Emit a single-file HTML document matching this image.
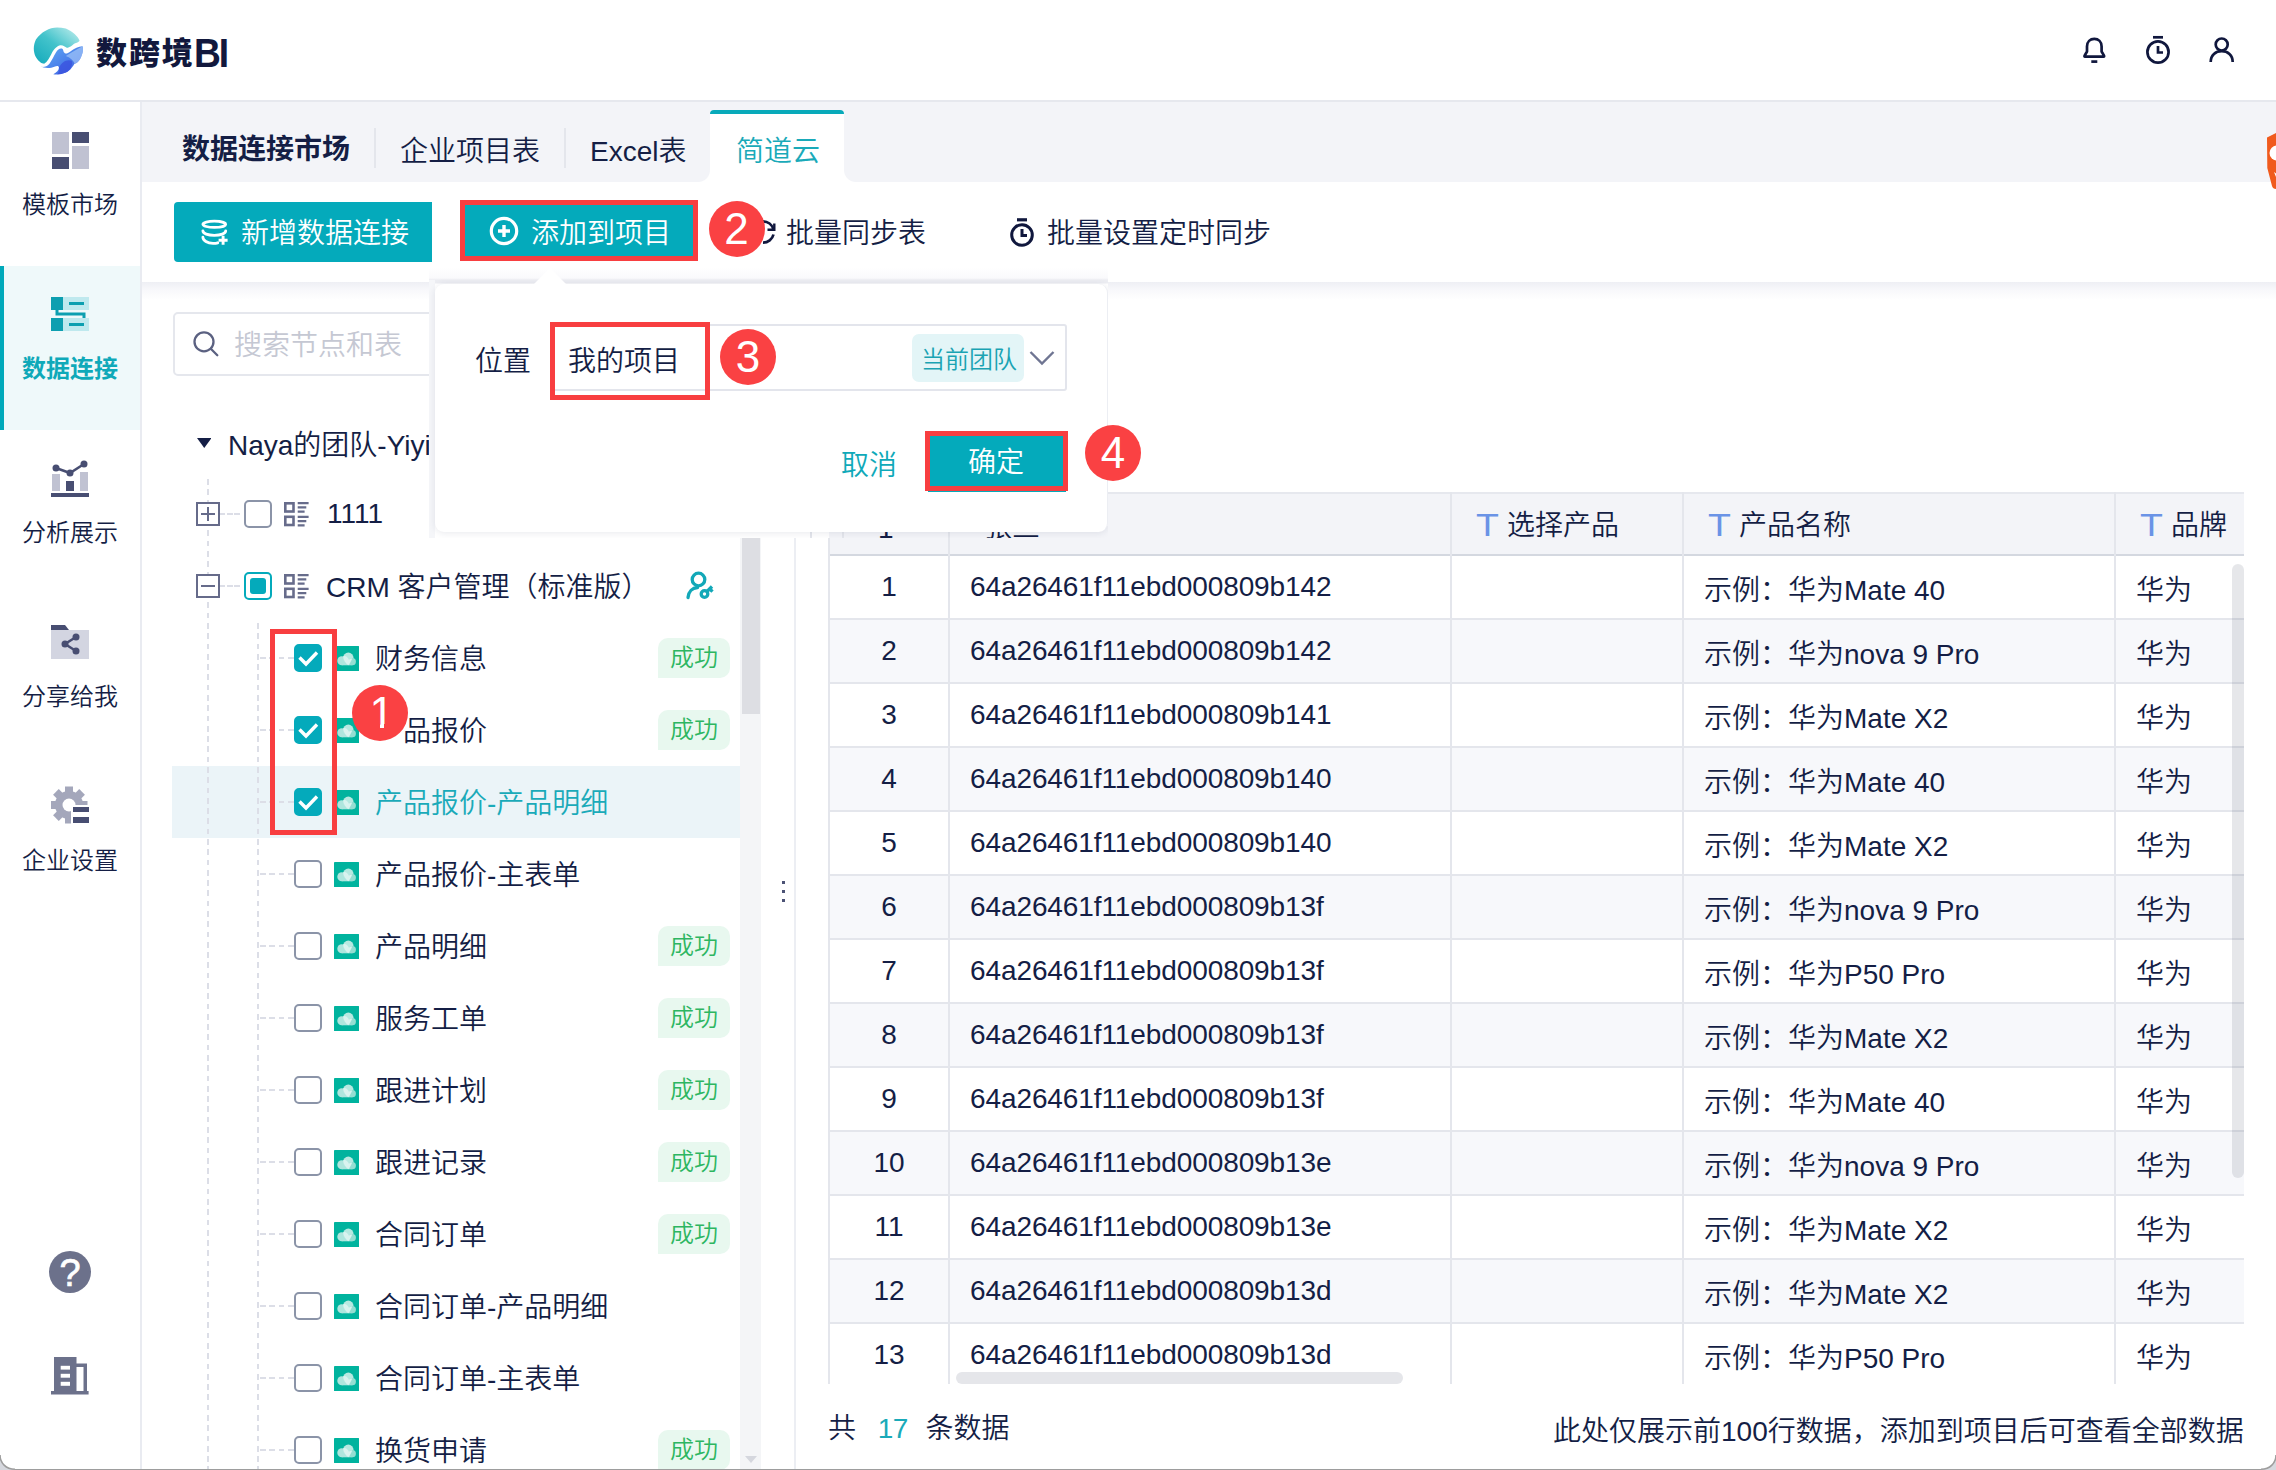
<!DOCTYPE html>
<html lang="zh-CN">
<head>
<meta charset="utf-8">
<title>数跨境BI</title>
<style>
*{box-sizing:border-box;margin:0;padding:0}
html,body{width:2276px;height:1470px;overflow:hidden;background:#fff}
body{font-family:"Liberation Sans","Noto Sans CJK SC",sans-serif;color:#141e45;font-size:28px;position:relative;font-weight:350}
.abs{position:absolute}
.t{position:absolute;white-space:nowrap;line-height:40px;height:40px;margin-top:2px}
/* header */
#header{position:absolute;left:0;top:0;width:2276px;height:102px;background:#fff;border-bottom:2px solid #e6e8ee}
#brand{position:absolute;left:0;top:0;color:#12183d}
#brand .bc{position:absolute;left:96px;top:32px;font-size:31px;line-height:44px;font-weight:900;letter-spacing:1.9px;white-space:nowrap}
#brand .bl{position:absolute;left:193.5px;top:28px;font-size:40px;line-height:50px;font-weight:bold;letter-spacing:-2.3px;transform-origin:0 50%;transform:scaleX(.93);white-space:nowrap}
/* sidebar */
#side{position:absolute;left:0;top:102px;width:142px;height:1368px;background:#fff;border-right:2px solid #e9ebf1}
.nav{position:absolute;left:0;width:140px;height:164px}
.nav .lb{position:absolute;left:0;width:140px;top:80px;text-align:center;font-size:24px;line-height:40px}
.nav.on{background:#eff9fa}
.nav.on:before{content:"";position:absolute;left:0;top:0;width:4px;height:164px;background:#00a9ba}
.nav.on .lb{color:#0fa9b9;font-weight:bold}
.nav svg{position:absolute}
/* tabbar */
#tabbar{position:absolute;left:142px;top:102px;width:2134px;height:80px;background:#f3f4f8}
#tab-on{position:absolute;left:710px;top:110px;width:134px;height:74px;background:#fff;border-top:4px solid #08aaba;border-radius:4px 4px 0 0}
.cc{position:absolute;top:170px;width:12px;height:12px}
.cc.l{left:698px;background:radial-gradient(circle at 0 0,#f3f4f8 11.5px,#fff 12.5px)}
.cc.r{left:844px;background:radial-gradient(circle at 100% 0,#f3f4f8 11.5px,#fff 12.5px)}
.sep{position:absolute;width:2px;height:40px;top:128px;background:#e4e6ec}
/* toolbar */
#toolbar{position:absolute;left:142px;top:182px;width:2134px;height:100px;background:#fff}
#tshadow{position:absolute;left:142px;top:282px;width:2134px;height:18px;background:linear-gradient(#eeeff4,#f8f8fb 45%,#fff)}
.btn{position:absolute;background:#04aabb;color:#fff;border-radius:3px}
.red{position:absolute;border:5px solid #f83e40}
.num{position:absolute;width:56px;height:56px;border-radius:50%;background:#fa4143;color:#fff;font-weight:400;font-size:44px;line-height:56px;text-align:center}
/* tree */
.row{position:absolute;left:172px;width:568px;height:72px}
.cb{position:absolute;width:28px;height:28px;border:2px solid #8b94a8;border-radius:5px;background:#fff}
.cb.on{background:#04aabb;border-color:#04aabb}
.ok{position:absolute;left:658px;width:72px;height:40px;border-radius:10px 10px 10px 0;background:#e8f8ef;color:#2db661;font-size:24px;line-height:40px;text-align:center}
.hl{position:absolute;height:2px;background:repeating-linear-gradient(to right,#dcdee7 0,#dcdee7 5.6px,transparent 5.6px,transparent 9.4px)}
.vl{position:absolute;width:2px;background:repeating-linear-gradient(to bottom,#dcdee7 0,#dcdee7 5.7px,transparent 5.7px,transparent 10.2857px)}
/* table */
#thead{position:absolute;left:829px;top:492px;width:1415px;height:64px;background:#f3f4f8;border-top:2px solid #e6e8ee;border-bottom:2px solid #d4d8e0}
.tr{position:absolute;left:829px;width:1415px;height:64px;border-bottom:2px solid #e4e6ec}
.tr.alt{background:#f7f8fb}
.vline{position:absolute;width:2px;background:#e4e6ec;top:492px;height:892px}
.T{color:#6a93e6;font-size:30px;transform-origin:0 50%;transform:scale(1.25,1.02)}
</style>
</head>
<body>
<div id="header">
<svg class="abs" style="left:32.5px;top:26.5px" width="50.3" height="48.3" viewBox="130 120 520 500">
<defs>
<linearGradient id="lg1" x1="0" y1="1" x2="1" y2="0"><stop offset="0" stop-color="#12a9bb"/><stop offset=".5" stop-color="#43c3cb"/><stop offset="1" stop-color="#c6f0ef"/></linearGradient>
<linearGradient id="lg2" x1="0" y1="0" x2="1" y2="1"><stop offset="0" stop-color="#63b0f4"/><stop offset=".6" stop-color="#4a7eea"/><stop offset="1" stop-color="#3b4fdc"/></linearGradient>
</defs>
<path d="M380 125 C300 125 215 170 160 250 C120 330 135 430 200 480 C215 495 232 500 245 500 C280 480 300 440 320 400 C340 360 370 320 410 310 C440 305 460 325 480 335 C510 335 540 305 560 290 C580 280 600 282 612 262 C595 215 540 165 470 135 C440 127 410 125 380 125 Z" fill="url(#lg1)"/>
<path d="M200 525 C225 540 270 535 300 500 C325 470 345 420 370 380 C385 355 400 345 420 342 C445 340 440 365 452 385 C465 405 490 390 520 370 C560 340 600 320 642 318 C655 345 645 400 620 445 C600 480 580 495 560 500 C545 520 520 570 470 592 C430 610 380 615 340 610 C375 590 400 565 398 540 C396 520 380 518 350 532 C310 550 245 550 200 525 Z" fill="url(#lg2)"/>
<path d="M470 420 C520 390 590 350 642 320 C655 345 645 400 620 445 C600 480 580 495 560 500 C550 470 520 440 470 420 Z" fill="#9cc2f7" opacity=".75"/>
<path d="M398 540 C430 480 480 450 530 470 C545 500 520 570 470 592 C440 606 410 610 380 612 C400 590 405 565 398 540 Z" fill="#3a52de" opacity=".8"/>
</svg>
<div id="brand"><span class="bc">数跨境</span><span class="bl">BI</span></div>
<svg class="abs" style="left:2078px;top:32px" width="34" height="36" viewBox="0 0 34 36" fill="none" stroke="#10173d" stroke-width="2.7">
<path d="M7 24.7 C6.5 24.7 6.3 24.2 6.6 23.7 L9 19.5 V14.5 C9 9.8 12.2 6.8 16.3 6.8 C20.4 6.8 23.6 9.8 23.6 14.5 V19.5 L26 23.7 C26.3 24.2 26.1 24.7 25.6 24.7 Z" stroke-linejoin="round"/>
<path d="M13.3 29.6 H19.3"/>
</svg>
<svg class="abs" style="left:2142px;top:32px" width="34" height="36" viewBox="0 0 34 36" fill="none" stroke="#10173d" stroke-width="2.7">
<circle cx="16" cy="20" r="10.6"/><path d="M11 5.3 H21"/><path d="M16 14 V20.5 H21"/>
</svg>
<svg class="abs" style="left:2205px;top:32px" width="34" height="36" viewBox="0 0 34 36" fill="none" stroke="#10173d" stroke-width="2.7">
<circle cx="16.7" cy="12.5" r="6"/><path d="M5.7 30 C5.7 23 10.7 19.2 16.7 19.2 C22.7 19.2 27.7 23 27.7 30"/>
</svg>
</div>
<div id="side">
<div class="nav" style="top:0px"><svg style="left:52px;top:30px" width="37" height="37" viewBox="0 0 37 37"><rect x="0" y="0" width="17" height="22" fill="#c0c2d2"/><rect x="20" y="0" width="17" height="11" fill="#484e72"/><rect x="20" y="14" width="17" height="23" fill="#c0c2d2"/><rect x="0" y="25" width="17" height="12" fill="#484e72"/></svg><div class="lb" style="top:83px">模板市场</div></div>
<div class="nav on" style="top:164px"><svg style="left:51px;top:31px" width="38" height="34" viewBox="0 0 38 34"><rect x="12" y="0" width="26" height="13" fill="#bfe9ee"/><rect x="12" y="21" width="26" height="13" fill="#bfe9ee"/><rect x="0" y="0" width="12" height="13" fill="#0d9fb0"/><rect x="0" y="21" width="12" height="13" fill="#0d9fb0"/><path d="M18 6.5 H33 M18 27.5 H33 M6 13 V17 H33 V21" fill="none" stroke="#0d9fb0" stroke-width="3"/></svg><div class="lb" style="top:83px">数据连接</div></div>
<div class="nav" style="top:328px"><svg style="left:51px;top:30px" width="38" height="38" viewBox="0 0 38 38"><rect x="1" y="14" width="8" height="17" fill="#c0c2d2"/><rect x="15" y="21" width="8" height="10" fill="#484e72"/><rect x="29" y="12" width="8" height="19" fill="#c0c2d2"/><rect x="0" y="33" width="38" height="4" fill="#484e72"/><path d="M5 8 L19 13 L33 4" stroke="#484e72" stroke-width="2.5" fill="none"/><circle cx="5" cy="8" r="3.5" fill="#484e72"/><circle cx="19" cy="13" r="3.5" fill="#484e72"/><circle cx="33" cy="4" r="3.5" fill="#484e72"/></svg><div class="lb" style="top:83px">分析展示</div></div>
<div class="nav" style="top:492px"><svg style="left:51px;top:31px" width="38" height="36" viewBox="0 0 38 36"><path d="M0 0 H14 L18 5 H0 Z" fill="#484e72"/><rect x="0" y="5" width="38" height="29" fill="#d3d5e1"/><path d="M25 12 L14 19 L25 26" stroke="#484e72" stroke-width="2.5" fill="none"/><circle cx="25" cy="12" r="3.5" fill="#484e72"/><circle cx="14" cy="19" r="3.5" fill="#484e72"/><circle cx="25" cy="26" r="3.5" fill="#484e72"/></svg><div class="lb" style="top:83px">分享给我</div></div>
<div class="nav" style="top:656px"><svg style="left:51px;top:28px" width="38" height="38" viewBox="0 0 38 38"><g transform="translate(18,19)"><g fill="#a4a7bb"><circle r="14"/><rect x="-4" y="-18.5" width="8" height="8" transform="rotate(0)"/><rect x="-4" y="-18.5" width="8" height="8" transform="rotate(45)"/><rect x="-4" y="-18.5" width="8" height="8" transform="rotate(90)"/><rect x="-4" y="-18.5" width="8" height="8" transform="rotate(135)"/><rect x="-4" y="-18.5" width="8" height="8" transform="rotate(180)"/><rect x="-4" y="-18.5" width="8" height="8" transform="rotate(225)"/><rect x="-4" y="-18.5" width="8" height="8" transform="rotate(270)"/><rect x="-4" y="-18.5" width="8" height="8" transform="rotate(315)"/></g><circle r="6.5" fill="#fff"/><rect x="2" y="0" width="20" height="20" fill="#fff"/></g><rect x="22" y="21" width="16" height="5" fill="#484e72"/><rect x="22" y="31" width="16" height="6" fill="#484e72"/></svg><div class="lb" style="top:83px">企业设置</div></div>
<svg class="abs" style="left:49px;top:1149px" width="42" height="42" viewBox="0 0 42 42"><circle cx="21" cy="21" r="21" fill="#6c718b"/><text x="21" y="34.5" font-size="38" fill="#fff" stroke="#fff" stroke-width=".700" text-anchor="middle" font-family="Liberation Sans,sans-serif">?</text></svg>
<svg class="abs" style="left:51px;top:1255px" width="38" height="38" viewBox="0 0 38 38"><path d="M3 0 H25.5 V6.4 H36 V34 H37.6 V37.6 H0 V34 H3 Z" fill="#6c718b"/><rect x="25.5" y="10" width="7" height="24" fill="#fff"/><rect x="9.7" y="8.8" width="9.3" height="3.8" fill="#fff"/><rect x="9.7" y="16.8" width="9.3" height="3.9" fill="#fff"/><rect x="9.7" y="24.8" width="9.3" height="4" fill="#fff"/></svg>
</div>
<div id="tabbar"></div>
<div class="t" style="left:182px;top:128px;font-weight:bold">数据连接市场</div>
<div class="sep" style="left:374px"></div>
<div class="t" style="left:400px;top:130px">企业项目表</div>
<div class="sep" style="left:564px"></div>
<div class="t" style="left:590px;top:130px">Excel表</div>
<div id="tab-on"></div><div class="cc l"></div><div class="cc r"></div>
<div class="t" style="left:736px;top:130px;color:#1aaab9">简道云</div>


<div id="toolbar"></div><div id="tshadow"></div>
<div class="btn" style="left:174px;top:202px;width:258px;height:60px;border-radius:4px 0 0 4px"></div>
<svg class="abs" style="left:200px;top:219px" width="30" height="28" viewBox="0 0 30 28" fill="none" stroke="#fff" stroke-width="2.8" stroke-linecap="round"><ellipse cx="14.3" cy="5.3" rx="11.4" ry="3.1"/><path d="M2.9 11.8 C2.9 14.6 8 16.4 14.3 16.4 C20.6 16.4 25.7 14.6 25.7 11.8"/><path d="M2.9 18.2 C2.9 21.5 7.5 24.3 13 24.4 C14.8 24.4 16.5 24.2 17.8 23.8"/><path d="M23.1 16.8 V25.8 M18.6 21.3 H27.6" stroke-linecap="butt" stroke-width="2.9"/></svg>
<div class="t" style="left:241px;top:212px;color:#fff">新增数据连接</div>
<div class="btn" style="left:462px;top:202px;width:234px;height:58px;border-radius:0"></div>
<div class="red" style="left:460px;top:200px;width:238px;height:61px"></div>
<svg class="abs" style="left:489px;top:215.7px" width="30" height="30" viewBox="0 0 30 30" fill="none" stroke="#fff" stroke-width="3.2"><circle cx="15" cy="15" r="12.7"/><path d="M15 9 V21 M9 15 H21" stroke-width="3.4"/></svg>
<div class="t" style="left:531px;top:212px;color:#fff">添加到项目</div>
<svg class="abs" style="left:748px;top:216px" width="30" height="32" viewBox="0 0 30 32" fill="none" stroke="#10173d" stroke-width="2.7"><path d="M15 5.3 A10.7 10.7 0 0 1 25.3 13.2"/><path d="M25.5 18.5 A10.7 10.7 0 0 1 15 26.7"/><path d="M19.5 13.8 H26.3 V7.5" stroke-width="2.4"/></svg>
<div class="num" style="left:708.5px;top:200.7px">2</div>
<div class="t" style="left:786px;top:212px">批量同步表</div>
<svg class="abs" style="left:1007px;top:216px" width="30" height="34" viewBox="0 0 30 34" fill="none" stroke="#10173d" stroke-width="3"><circle cx="15" cy="19" r="10.3"/><path d="M10 3.8 H20" stroke-width="3.2"/><path d="M15 13 V19.5 H20"/></svg>
<div class="t" style="left:1047px;top:212px">批量设置定时同步</div>
<svg class="abs" style="left:2266px;top:132px" width="10" height="57" viewBox="0 0 10 57"><path d="M1 5.5 L10 1 V57 C8 57 6.5 56 6 54 L1.3 36 Z" fill="#f05a1d"/><circle cx="11" cy="21" r="7.5" fill="#fff"/><path d="M8 40 L10 41.5 V45 Z" fill="#fff"/></svg>

<div class="abs" style="left:172.5px;top:312px;width:300px;height:64px;border:2px solid #e5e7ed;border-radius:5px"></div>
<svg class="abs" style="left:191px;top:329px" width="32" height="32" viewBox="0 0 32 32" fill="none" stroke="#5b6181" stroke-width="2.3"><circle cx="13" cy="12.8" r="9.5"/><path d="M19.8 19.8 L26.3 26.3" stroke-linecap="round"/></svg>
<div class="t" style="left:234px;top:324px;color:#c5c8d3">搜索节点和表</div>
<svg class="abs" style="left:196.8px;top:438px" width="14.5" height="10" viewBox="0 0 14.5 10"><path d="M0 0 H14.5 L7.25 10 Z" fill="#141e45"/></svg>
<div class="t" style="left:228px;top:424px">Naya的团队-Yiyi</div>
<div class="vl" style="left:207px;top:479.2px;height:991px"></div>
<div class="vl" style="left:257px;top:623.2px;height:847px"></div>

<div class="hl" style="left:220px;top:513px;width:20px;background:repeating-linear-gradient(to right,#dcdee7 0,#dcdee7 5.3px,transparent 5.3px,transparent 7.2px)"></div>
<svg class="abs" style="left:196px;top:502px" width="24" height="24" viewBox="0 0 24 24" fill="#fff" stroke="#666b8a" stroke-width="2"><rect x="1" y="1" width="22" height="22"/><path d="M5 12 H19 M12 5 V19"/></svg>
<div class="cb" style="left:244px;top:500px"></div>
<svg class="abs" style="left:283.7px;top:501.8px" width="25" height="25" viewBox="0 0 25 25" fill="none" stroke="#676c8b"><rect x="1.3" y="1.3" width="8.2" height="8.2" stroke-width="2.6"/><rect x="1.3" y="14.8" width="8.2" height="8.2" stroke-width="2.6"/><path d="M13.7 1.2 H24.6 M13.7 5.4 H22.3 M13.7 9.7 H20.6 M13.7 14.9 H24.6 M13.7 19.1 H22.3 M13.7 23.4 H20.6" stroke-width="2.3"/></svg>
<div class="t" style="left:327px;top:492px">1111</div>
<div class="hl" style="left:220px;top:585px;width:20px;background:repeating-linear-gradient(to right,#dcdee7 0,#dcdee7 5.3px,transparent 5.3px,transparent 7.2px)"></div>
<svg class="abs" style="left:196px;top:574px" width="24" height="24" viewBox="0 0 24 24" fill="#fff" stroke="#666b8a" stroke-width="2"><rect x="1" y="1" width="22" height="22"/><path d="M5 12 H19"/></svg>
<div class="cb" style="left:244px;top:572px;border-color:#04aabb"></div><div class="abs" style="left:250px;top:578px;width:16px;height:16px;border-radius:3px;background:#04aabb"></div>
<svg class="abs" style="left:283.7px;top:573.8px" width="25" height="25" viewBox="0 0 25 25" fill="none" stroke="#676c8b"><rect x="1.3" y="1.3" width="8.2" height="8.2" stroke-width="2.6"/><rect x="1.3" y="14.8" width="8.2" height="8.2" stroke-width="2.6"/><path d="M13.7 1.2 H24.6 M13.7 5.4 H22.3 M13.7 9.7 H20.6 M13.7 14.9 H24.6 M13.7 19.1 H22.3 M13.7 23.4 H20.6" stroke-width="2.3"/></svg>
<div class="t" style="left:326px;top:566px">CRM 客户管理（标准版）</div>
<svg class="abs" style="left:685px;top:571px" width="32" height="30" viewBox="0 0 32 30" fill="none" stroke="#12a8b8" stroke-width="3.3" stroke-linecap="round"><circle cx="13.5" cy="8.5" r="6.3"/><path d="M3 26.5 C3.5 20.5 7.5 16.8 12.5 16.5"/><circle cx="19.5" cy="23" r="3.3"/><path d="M22 20.5 L27 15.5 M24.8 18 L27.5 20.7" stroke-linecap="butt"/></svg>
<div class="hl" style="left:260.2px;top:657px;width:34px"></div>
<div class="cb on" style="left:294px;top:644px"></div><svg class="abs" style="left:294px;top:644px" width="28" height="28" viewBox="0 0 28 28" fill="none" stroke="#fff" stroke-width="3.4"><path d="M5.5 13.5 L12 20 L23 8.5"/></svg>
<svg class="abs" style="left:333.8px;top:645.9px" width="25.2" height="25.2" viewBox="0 0 25.2 25.2"><rect width="25.2" height="25.2" rx=".800" fill="#00b39e"/><circle cx="7.8" cy="14.8" r="4.5" fill="#aee6de"/><rect x="7.8" y="14" width="10.6" height="5.3" fill="#aee6de"/><circle cx="14.3" cy="11.9" r="5.3" fill="#b7e9e1"/><circle cx="18.3" cy="15.7" r="3.6" fill="#95ded2"/><path d="M9.2 10.4 C11 9.2 13.6 10.5 14.9 13.8 C15.8 12.6 17 12.3 18.1 12.7 C17.3 15 15.8 17.5 14.3 19.3 C11.5 17.3 9.3 13.5 9.2 10.4 Z" fill="#d9f3ef"/></svg>
<div class="t" style="left:375px;top:638px">财务信息</div>
<div class="ok" style="top:638px">成功</div>
<div class="hl" style="left:260.2px;top:729px;width:34px"></div>
<div class="cb on" style="left:294px;top:716px"></div><svg class="abs" style="left:294px;top:716px" width="28" height="28" viewBox="0 0 28 28" fill="none" stroke="#fff" stroke-width="3.4"><path d="M5.5 13.5 L12 20 L23 8.5"/></svg>
<svg class="abs" style="left:333.8px;top:717.9px" width="25.2" height="25.2" viewBox="0 0 25.2 25.2"><rect width="25.2" height="25.2" rx=".800" fill="#00b39e"/><circle cx="7.8" cy="14.8" r="4.5" fill="#aee6de"/><rect x="7.8" y="14" width="10.6" height="5.3" fill="#aee6de"/><circle cx="14.3" cy="11.9" r="5.3" fill="#b7e9e1"/><circle cx="18.3" cy="15.7" r="3.6" fill="#95ded2"/><path d="M9.2 10.4 C11 9.2 13.6 10.5 14.9 13.8 C15.8 12.6 17 12.3 18.1 12.7 C17.3 15 15.8 17.5 14.3 19.3 C11.5 17.3 9.3 13.5 9.2 10.4 Z" fill="#d9f3ef"/></svg>
<div class="t" style="left:375px;top:710px">产品报价</div>
<div class="ok" style="top:710px">成功</div>
<div class="abs" style="left:172px;top:766px;width:568px;height:72px;background:#ebf4f8"></div><div class="vl" style="left:207px;top:767.2px;height:70.8px"></div><div class="vl" style="left:257px;top:767.2px;height:70.8px"></div>
<div class="hl" style="left:260.2px;top:801px;width:34px"></div>
<div class="cb on" style="left:294px;top:788px"></div><svg class="abs" style="left:294px;top:788px" width="28" height="28" viewBox="0 0 28 28" fill="none" stroke="#fff" stroke-width="3.4"><path d="M5.5 13.5 L12 20 L23 8.5"/></svg>
<svg class="abs" style="left:333.8px;top:789.9px" width="25.2" height="25.2" viewBox="0 0 25.2 25.2"><rect width="25.2" height="25.2" rx=".800" fill="#00b39e"/><circle cx="7.8" cy="14.8" r="4.5" fill="#aee6de"/><rect x="7.8" y="14" width="10.6" height="5.3" fill="#aee6de"/><circle cx="14.3" cy="11.9" r="5.3" fill="#b7e9e1"/><circle cx="18.3" cy="15.7" r="3.6" fill="#95ded2"/><path d="M9.2 10.4 C11 9.2 13.6 10.5 14.9 13.8 C15.8 12.6 17 12.3 18.1 12.7 C17.3 15 15.8 17.5 14.3 19.3 C11.5 17.3 9.3 13.5 9.2 10.4 Z" fill="#d9f3ef"/></svg>
<div class="t" style="left:375px;top:782px;color:#1aaab9">产品报价-产品明细</div>
<div class="hl" style="left:260.2px;top:873px;width:34px"></div>
<div class="cb" style="left:294px;top:860px"></div>
<svg class="abs" style="left:333.8px;top:861.9px" width="25.2" height="25.2" viewBox="0 0 25.2 25.2"><rect width="25.2" height="25.2" rx=".800" fill="#00b39e"/><circle cx="7.8" cy="14.8" r="4.5" fill="#aee6de"/><rect x="7.8" y="14" width="10.6" height="5.3" fill="#aee6de"/><circle cx="14.3" cy="11.9" r="5.3" fill="#b7e9e1"/><circle cx="18.3" cy="15.7" r="3.6" fill="#95ded2"/><path d="M9.2 10.4 C11 9.2 13.6 10.5 14.9 13.8 C15.8 12.6 17 12.3 18.1 12.7 C17.3 15 15.8 17.5 14.3 19.3 C11.5 17.3 9.3 13.5 9.2 10.4 Z" fill="#d9f3ef"/></svg>
<div class="t" style="left:375px;top:854px">产品报价-主表单</div>
<div class="hl" style="left:260.2px;top:945px;width:34px"></div>
<div class="cb" style="left:294px;top:932px"></div>
<svg class="abs" style="left:333.8px;top:933.9px" width="25.2" height="25.2" viewBox="0 0 25.2 25.2"><rect width="25.2" height="25.2" rx=".800" fill="#00b39e"/><circle cx="7.8" cy="14.8" r="4.5" fill="#aee6de"/><rect x="7.8" y="14" width="10.6" height="5.3" fill="#aee6de"/><circle cx="14.3" cy="11.9" r="5.3" fill="#b7e9e1"/><circle cx="18.3" cy="15.7" r="3.6" fill="#95ded2"/><path d="M9.2 10.4 C11 9.2 13.6 10.5 14.9 13.8 C15.8 12.6 17 12.3 18.1 12.7 C17.3 15 15.8 17.5 14.3 19.3 C11.5 17.3 9.3 13.5 9.2 10.4 Z" fill="#d9f3ef"/></svg>
<div class="t" style="left:375px;top:926px">产品明细</div>
<div class="ok" style="top:926px">成功</div>
<div class="hl" style="left:260.2px;top:1017px;width:34px"></div>
<div class="cb" style="left:294px;top:1004px"></div>
<svg class="abs" style="left:333.8px;top:1005.9px" width="25.2" height="25.2" viewBox="0 0 25.2 25.2"><rect width="25.2" height="25.2" rx=".800" fill="#00b39e"/><circle cx="7.8" cy="14.8" r="4.5" fill="#aee6de"/><rect x="7.8" y="14" width="10.6" height="5.3" fill="#aee6de"/><circle cx="14.3" cy="11.9" r="5.3" fill="#b7e9e1"/><circle cx="18.3" cy="15.7" r="3.6" fill="#95ded2"/><path d="M9.2 10.4 C11 9.2 13.6 10.5 14.9 13.8 C15.8 12.6 17 12.3 18.1 12.7 C17.3 15 15.8 17.5 14.3 19.3 C11.5 17.3 9.3 13.5 9.2 10.4 Z" fill="#d9f3ef"/></svg>
<div class="t" style="left:375px;top:998px">服务工单</div>
<div class="ok" style="top:998px">成功</div>
<div class="hl" style="left:260.2px;top:1089px;width:34px"></div>
<div class="cb" style="left:294px;top:1076px"></div>
<svg class="abs" style="left:333.8px;top:1077.9px" width="25.2" height="25.2" viewBox="0 0 25.2 25.2"><rect width="25.2" height="25.2" rx=".800" fill="#00b39e"/><circle cx="7.8" cy="14.8" r="4.5" fill="#aee6de"/><rect x="7.8" y="14" width="10.6" height="5.3" fill="#aee6de"/><circle cx="14.3" cy="11.9" r="5.3" fill="#b7e9e1"/><circle cx="18.3" cy="15.7" r="3.6" fill="#95ded2"/><path d="M9.2 10.4 C11 9.2 13.6 10.5 14.9 13.8 C15.8 12.6 17 12.3 18.1 12.7 C17.3 15 15.8 17.5 14.3 19.3 C11.5 17.3 9.3 13.5 9.2 10.4 Z" fill="#d9f3ef"/></svg>
<div class="t" style="left:375px;top:1070px">跟进计划</div>
<div class="ok" style="top:1070px">成功</div>
<div class="hl" style="left:260.2px;top:1161px;width:34px"></div>
<div class="cb" style="left:294px;top:1148px"></div>
<svg class="abs" style="left:333.8px;top:1149.9px" width="25.2" height="25.2" viewBox="0 0 25.2 25.2"><rect width="25.2" height="25.2" rx=".800" fill="#00b39e"/><circle cx="7.8" cy="14.8" r="4.5" fill="#aee6de"/><rect x="7.8" y="14" width="10.6" height="5.3" fill="#aee6de"/><circle cx="14.3" cy="11.9" r="5.3" fill="#b7e9e1"/><circle cx="18.3" cy="15.7" r="3.6" fill="#95ded2"/><path d="M9.2 10.4 C11 9.2 13.6 10.5 14.9 13.8 C15.8 12.6 17 12.3 18.1 12.7 C17.3 15 15.8 17.5 14.3 19.3 C11.5 17.3 9.3 13.5 9.2 10.4 Z" fill="#d9f3ef"/></svg>
<div class="t" style="left:375px;top:1142px">跟进记录</div>
<div class="ok" style="top:1142px">成功</div>
<div class="hl" style="left:260.2px;top:1233px;width:34px"></div>
<div class="cb" style="left:294px;top:1220px"></div>
<svg class="abs" style="left:333.8px;top:1221.9px" width="25.2" height="25.2" viewBox="0 0 25.2 25.2"><rect width="25.2" height="25.2" rx=".800" fill="#00b39e"/><circle cx="7.8" cy="14.8" r="4.5" fill="#aee6de"/><rect x="7.8" y="14" width="10.6" height="5.3" fill="#aee6de"/><circle cx="14.3" cy="11.9" r="5.3" fill="#b7e9e1"/><circle cx="18.3" cy="15.7" r="3.6" fill="#95ded2"/><path d="M9.2 10.4 C11 9.2 13.6 10.5 14.9 13.8 C15.8 12.6 17 12.3 18.1 12.7 C17.3 15 15.8 17.5 14.3 19.3 C11.5 17.3 9.3 13.5 9.2 10.4 Z" fill="#d9f3ef"/></svg>
<div class="t" style="left:375px;top:1214px">合同订单</div>
<div class="ok" style="top:1214px">成功</div>
<div class="hl" style="left:260.2px;top:1305px;width:34px"></div>
<div class="cb" style="left:294px;top:1292px"></div>
<svg class="abs" style="left:333.8px;top:1293.9px" width="25.2" height="25.2" viewBox="0 0 25.2 25.2"><rect width="25.2" height="25.2" rx=".800" fill="#00b39e"/><circle cx="7.8" cy="14.8" r="4.5" fill="#aee6de"/><rect x="7.8" y="14" width="10.6" height="5.3" fill="#aee6de"/><circle cx="14.3" cy="11.9" r="5.3" fill="#b7e9e1"/><circle cx="18.3" cy="15.7" r="3.6" fill="#95ded2"/><path d="M9.2 10.4 C11 9.2 13.6 10.5 14.9 13.8 C15.8 12.6 17 12.3 18.1 12.7 C17.3 15 15.8 17.5 14.3 19.3 C11.5 17.3 9.3 13.5 9.2 10.4 Z" fill="#d9f3ef"/></svg>
<div class="t" style="left:375px;top:1286px">合同订单-产品明细</div>
<div class="hl" style="left:260.2px;top:1377px;width:34px"></div>
<div class="cb" style="left:294px;top:1364px"></div>
<svg class="abs" style="left:333.8px;top:1365.9px" width="25.2" height="25.2" viewBox="0 0 25.2 25.2"><rect width="25.2" height="25.2" rx=".800" fill="#00b39e"/><circle cx="7.8" cy="14.8" r="4.5" fill="#aee6de"/><rect x="7.8" y="14" width="10.6" height="5.3" fill="#aee6de"/><circle cx="14.3" cy="11.9" r="5.3" fill="#b7e9e1"/><circle cx="18.3" cy="15.7" r="3.6" fill="#95ded2"/><path d="M9.2 10.4 C11 9.2 13.6 10.5 14.9 13.8 C15.8 12.6 17 12.3 18.1 12.7 C17.3 15 15.8 17.5 14.3 19.3 C11.5 17.3 9.3 13.5 9.2 10.4 Z" fill="#d9f3ef"/></svg>
<div class="t" style="left:375px;top:1358px">合同订单-主表单</div>
<div class="hl" style="left:260.2px;top:1449px;width:34px"></div>
<div class="cb" style="left:294px;top:1436px"></div>
<svg class="abs" style="left:333.8px;top:1437.9px" width="25.2" height="25.2" viewBox="0 0 25.2 25.2"><rect width="25.2" height="25.2" rx=".800" fill="#00b39e"/><circle cx="7.8" cy="14.8" r="4.5" fill="#aee6de"/><rect x="7.8" y="14" width="10.6" height="5.3" fill="#aee6de"/><circle cx="14.3" cy="11.9" r="5.3" fill="#b7e9e1"/><circle cx="18.3" cy="15.7" r="3.6" fill="#95ded2"/><path d="M9.2 10.4 C11 9.2 13.6 10.5 14.9 13.8 C15.8 12.6 17 12.3 18.1 12.7 C17.3 15 15.8 17.5 14.3 19.3 C11.5 17.3 9.3 13.5 9.2 10.4 Z" fill="#d9f3ef"/></svg>
<div class="t" style="left:375px;top:1430px">换货申请</div>
<div class="ok" style="top:1430px">成功</div>
<div class="red" style="left:270px;top:629px;width:67px;height:206px;border-width:5px"></div>
<div class="abs" style="left:371px;top:735px;width:16px;height:11px;background:#fff"></div><div class="num" style="left:352.3px;top:685.2px;padding-left:3px">1<i style="position:absolute;left:18.5px;top:39px;width:9.7px;height:4.5px;background:#fa4143"></i><i style="position:absolute;left:31.8px;top:39px;width:9.5px;height:4.5px;background:#fa4143"></i></div>
<div class="abs" style="left:740px;top:283px;width:21px;height:1187px;background:#f4f5f7"></div>
<div class="abs" style="left:742px;top:538px;width:18px;height:176px;background:#dddee3"></div>
<svg class="abs" style="left:745px;top:1456px" width="12" height="7" viewBox="0 0 12 7"><path d="M0 0 H12 L6 7 Z" fill="#d5d7de"/></svg>
<div class="abs" style="left:794px;top:283px;width:2px;height:1187px;background:#eceef3"></div>
<div class="abs" style="left:782px;top:881px;width:3px;height:3px;background:#4b5275"></div>
<div class="abs" style="left:782px;top:890px;width:3px;height:3px;background:#4b5275"></div>
<div class="abs" style="left:782px;top:899px;width:3px;height:3px;background:#4b5275"></div>

<div id="thead"></div>
<div class="tr" style="top:556px;height:64px"></div>
<div class="t" style="left:829px;width:120px;text-align:center;top:565px">1</div>
<div class="t" style="left:970px;top:565px;letter-spacing:-.1px">64a26461f11ebd000809b142</div>
<div class="t" style="left:1704px;top:569px">示例：华为Mate 40</div>
<div class="t" style="left:2136px;top:569px">华为</div>
<div class="tr alt" style="top:620px;height:64px"></div>
<div class="t" style="left:829px;width:120px;text-align:center;top:629px">2</div>
<div class="t" style="left:970px;top:629px;letter-spacing:-.1px">64a26461f11ebd000809b142</div>
<div class="t" style="left:1704px;top:633px">示例：华为nova 9 Pro</div>
<div class="t" style="left:2136px;top:633px">华为</div>
<div class="tr" style="top:684px;height:64px"></div>
<div class="t" style="left:829px;width:120px;text-align:center;top:693px">3</div>
<div class="t" style="left:970px;top:693px;letter-spacing:-.1px">64a26461f11ebd000809b141</div>
<div class="t" style="left:1704px;top:697px">示例：华为Mate X2</div>
<div class="t" style="left:2136px;top:697px">华为</div>
<div class="tr alt" style="top:748px;height:64px"></div>
<div class="t" style="left:829px;width:120px;text-align:center;top:757px">4</div>
<div class="t" style="left:970px;top:757px;letter-spacing:-.1px">64a26461f11ebd000809b140</div>
<div class="t" style="left:1704px;top:761px">示例：华为Mate 40</div>
<div class="t" style="left:2136px;top:761px">华为</div>
<div class="tr" style="top:812px;height:64px"></div>
<div class="t" style="left:829px;width:120px;text-align:center;top:821px">5</div>
<div class="t" style="left:970px;top:821px;letter-spacing:-.1px">64a26461f11ebd000809b140</div>
<div class="t" style="left:1704px;top:825px">示例：华为Mate X2</div>
<div class="t" style="left:2136px;top:825px">华为</div>
<div class="tr alt" style="top:876px;height:64px"></div>
<div class="t" style="left:829px;width:120px;text-align:center;top:885px">6</div>
<div class="t" style="left:970px;top:885px;letter-spacing:-.1px">64a26461f11ebd000809b13f</div>
<div class="t" style="left:1704px;top:889px">示例：华为nova 9 Pro</div>
<div class="t" style="left:2136px;top:889px">华为</div>
<div class="tr" style="top:940px;height:64px"></div>
<div class="t" style="left:829px;width:120px;text-align:center;top:949px">7</div>
<div class="t" style="left:970px;top:949px;letter-spacing:-.1px">64a26461f11ebd000809b13f</div>
<div class="t" style="left:1704px;top:953px">示例：华为P50 Pro</div>
<div class="t" style="left:2136px;top:953px">华为</div>
<div class="tr alt" style="top:1004px;height:64px"></div>
<div class="t" style="left:829px;width:120px;text-align:center;top:1013px">8</div>
<div class="t" style="left:970px;top:1013px;letter-spacing:-.1px">64a26461f11ebd000809b13f</div>
<div class="t" style="left:1704px;top:1017px">示例：华为Mate X2</div>
<div class="t" style="left:2136px;top:1017px">华为</div>
<div class="tr" style="top:1068px;height:64px"></div>
<div class="t" style="left:829px;width:120px;text-align:center;top:1077px">9</div>
<div class="t" style="left:970px;top:1077px;letter-spacing:-.1px">64a26461f11ebd000809b13f</div>
<div class="t" style="left:1704px;top:1081px">示例：华为Mate 40</div>
<div class="t" style="left:2136px;top:1081px">华为</div>
<div class="tr alt" style="top:1132px;height:64px"></div>
<div class="t" style="left:829px;width:120px;text-align:center;top:1141px">10</div>
<div class="t" style="left:970px;top:1141px;letter-spacing:-.1px">64a26461f11ebd000809b13e</div>
<div class="t" style="left:1704px;top:1145px">示例：华为nova 9 Pro</div>
<div class="t" style="left:2136px;top:1145px">华为</div>
<div class="tr" style="top:1196px;height:64px"></div>
<div class="t" style="left:829px;width:120px;text-align:center;top:1205px">11</div>
<div class="t" style="left:970px;top:1205px;letter-spacing:-.1px">64a26461f11ebd000809b13e</div>
<div class="t" style="left:1704px;top:1209px">示例：华为Mate X2</div>
<div class="t" style="left:2136px;top:1209px">华为</div>
<div class="tr alt" style="top:1260px;height:64px"></div>
<div class="t" style="left:829px;width:120px;text-align:center;top:1269px">12</div>
<div class="t" style="left:970px;top:1269px;letter-spacing:-.1px">64a26461f11ebd000809b13d</div>
<div class="t" style="left:1704px;top:1273px">示例：华为Mate X2</div>
<div class="t" style="left:2136px;top:1273px">华为</div>
<div class="tr" style="top:1324px;height:60px;border-bottom:none"></div>
<div class="t" style="left:829px;width:120px;text-align:center;top:1333px">13</div>
<div class="t" style="left:970px;top:1333px;letter-spacing:-.1px">64a26461f11ebd000809b13d</div>
<div class="t" style="left:1704px;top:1337px">示例：华为P50 Pro</div>
<div class="t" style="left:2136px;top:1337px">华为</div>
<div class="vline" style="left:828px"></div>
<div class="vline" style="left:948px"></div>
<div class="vline" style="left:1450px"></div>
<div class="vline" style="left:1682px"></div>
<div class="vline" style="left:2114px"></div>
<div class="t T" style="left:1476px;top:504px">T</div><div class="t" style="left:1507px;top:504px">选择产品</div>
<div class="t T" style="left:1708px;top:504px">T</div><div class="t" style="left:1739px;top:504px">产品名称</div>
<div class="t T" style="left:2140px;top:504px">T</div><div class="t" style="left:2171px;top:504px">品牌</div>
<div class="abs" style="left:2232.3px;top:564px;width:11.7px;height:614px;border-radius:6px;background:rgba(60,66,90,.13)"></div>
<div class="abs" style="left:956px;top:1372px;width:447px;height:12px;border-radius:6px;background:#e5e6ea"></div>
<div class="t" style="left:828px;top:1407px">共 <span style="color:#1aaab9;margin:0 10px 0 14px;letter-spacing:-.6px">17</span> 条数据</div>
<div class="t" style="left:1553px;top:1410px">此处仅展示前100行数据，添加到项目后可查看全部数据</div>

<div class="abs" style="left:429px;top:268px;width:678.5px;height:270px;overflow:hidden;background:#fff">
<div class="abs" style="left:0;top:0;width:680px;height:16px;background:linear-gradient(#fff,#fafafc 10px,#ecedf2 12px,#ecedf2 15px,#fff 16px)"></div>
<div class="abs" style="left:0;top:12px;width:6px;height:258px;background:#f5f6f9"></div>
<div class="abs" style="left:400px;top:258px;width:280px;height:12px;background:#f3f4f8"></div>
<div class="abs" style="left:381px;top:258px;width:2px;height:12px;background:#e4e6ec"></div>
<div class="abs" style="left:413px;top:258px;width:2px;height:12px;background:#e4e6ec"></div>
<div class="abs" style="left:519px;top:258px;width:2px;height:12px;background:#e4e6ec"></div>
<div class="t" style="left:449px;top:239px">1</div><div class="t" style="left:555px;top:238px">张三 一</div>
<div class="abs" style="left:6px;top:15.5px;width:672.5px;height:248.5px;background:#fff;border-radius:9px;border-right:1.5px solid #eceef3;box-shadow:0 1px 7px rgba(30,40,80,.10)"></div>
</div>
<svg class="abs" style="left:534px;top:268px" width="32" height="16" viewBox="0 0 32 16"><path d="M0 16 L16 0 L32 16 Z" fill="#fff"/></svg>
<div class="t" style="left:475px;top:340px">位置</div>
<div class="abs" style="left:552px;top:324px;width:515px;height:67px;border:2px solid #e3e5ec;border-radius:3px"></div>
<div class="t" style="left:568px;top:340px">我的项目</div>
<div class="red" style="left:549.5px;top:321.5px;width:160px;height:78px"></div>
<div class="num" style="left:720.1px;top:329.3px">3</div>
<div class="abs" style="left:912px;top:334px;width:112px;height:48px;border-radius:7px;background:#e3f5f7"></div>
<div class="t" style="left:921px;top:338px;font-size:24px;color:#1aa3b3">当前团队</div>
<svg class="abs" style="left:1029px;top:350px" width="26" height="16" viewBox="0 0 26 16" fill="none" stroke="#6f7592" stroke-width="2.4"><path d="M1.5 2 L13 13.5 L24.5 2"/></svg>
<div class="t" style="left:841px;top:444px;color:#0fa9b9">取消</div>
<div class="abs" style="left:928px;top:434px;width:138px;height:58px;background:#04aabb"></div>
<div class="red" style="left:925px;top:431px;width:143px;height:60px"></div>
<div class="t" style="left:968px;top:441px;color:#fff">确定</div>
<div class="num" style="left:1085px;top:425.1px">4</div>

<div class="abs" style="left:0;top:1468.7px;width:2276px;height:1.3px;background:#9d9d9d"></div>
<svg class="abs" style="left:0;top:1455px" width="15" height="15" viewBox="0 0 15 15"><path d="M0 0 C0 8 6 14.2 15 14.2 V15 H0 Z" fill="#d6d8de"/><path d="M0 0 C0 8 6 14.2 15 14.2" fill="none" stroke="#9d9d9d" stroke-width="1.6"/></svg>
<svg class="abs" style="left:2261px;top:1455px" width="15" height="15" viewBox="0 0 15 15"><path d="M15 0 C15 8 9 14.2 0 14.2 V15 H15 Z" fill="#d6d8de"/><path d="M15 0 C15 8 9 14.2 0 14.2" fill="none" stroke="#9d9d9d" stroke-width="1.6"/></svg>

</body>
</html>
